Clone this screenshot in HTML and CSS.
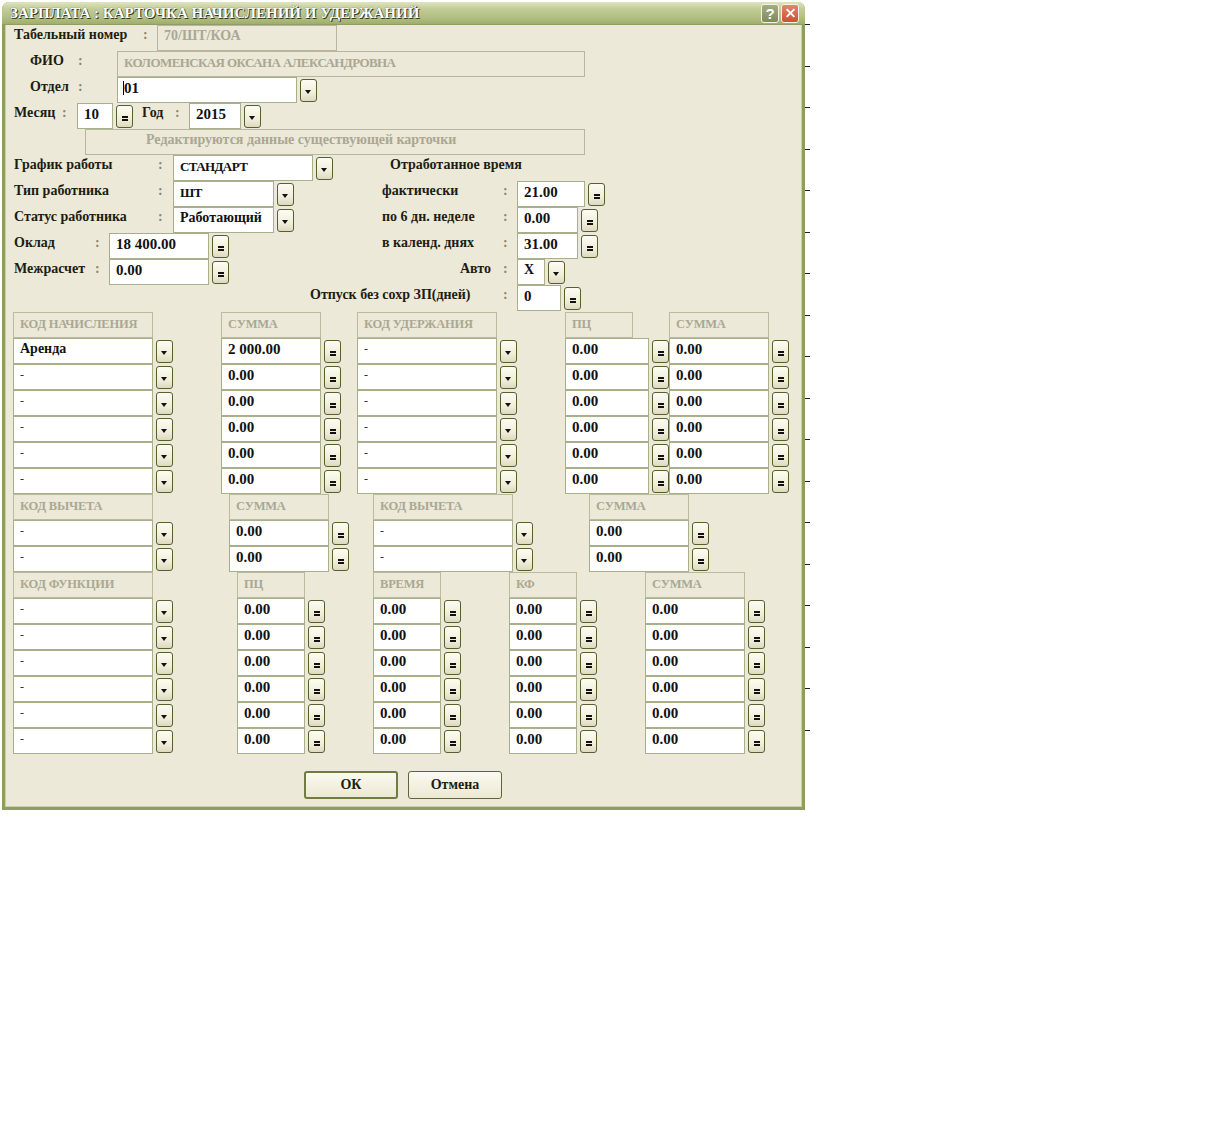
FILE: index.html
```html
<!DOCTYPE html>
<html lang="ru">
<head>
<meta charset="utf-8">
<title>Зарплата</title>
<link rel="stylesheet" href="styles.css">
</head>
<body>
<div class="desktop">
  <div class="ticks-right"></div>
  <div class="window">
    <div class="titlebar">
      <span class="title">ЗАРПЛАТА : КАРТОЧКА НАЧИСЛЕНИЙ И УДЕРЖАНИЙ</span>
      <span class="tb-btns"><span class="tb-help">?</span><span class="tb-close"></span></span>
    </div>
    <div class="form">
      <div class="row pl9">
        <span class="lbl w129">Табельный номер</span><span class="colon w14">:</span><span class="field ro w180">70/ШТ/КОА</span>
      </div>
      <div class="row pl25">
        <span class="lbl w48">ФИО</span><span class="colon w39">:</span><span class="field ro caps w468">КОЛОМЕНСКАЯ ОКСАНА АЛЕКСАНДРОВНА</span>
      </div>
      <div class="row pl25">
        <span class="lbl w48">Отдел</span><span class="colon w39">:</span><span class="field num w180"><span class="caret"></span>01</span><span class="btn dd"></span>
      </div>
      <div class="row pl9">
        <span class="lbl w48">Месяц</span><span class="colon w15">:</span><span class="field num w36">10</span><span class="btn eq"></span>
        <span class="lbl w33 ml9">Год</span><span class="colon w14">:</span><span class="field num w52">2015</span><span class="btn dd"></span>
      </div>
      <div class="row pl80">
        <span class="field ro w500 note">Редактируются данные существующей карточки</span>
      </div>
      <div class="row pl9">
        <span class="lbl w144">График работы</span><span class="colon w15">:</span><span class="field caps w140">СТАНДАРТ</span><span class="btn dd"></span>
        <span class="lbl ml57">Отработанное время</span>
      </div>
      <div class="row pl9">
        <span class="lbl w144">Тип работника</span><span class="colon w15">:</span><span class="field caps w101">ШТ</span><span class="btn dd"></span>
        <span class="lbl w121 ml88">фактически</span><span class="colon w14">:</span><span class="field num w68">21.00</span><span class="btn eq"></span>
      </div>
      <div class="row pl9">
        <span class="lbl w144">Статус работника</span><span class="colon w15">:</span><span class="field w101">Работающий</span><span class="btn dd"></span>
        <span class="lbl w121 ml88">по 6 дн. неделе</span><span class="colon w14">:</span><span class="field num w61">0.00</span><span class="btn eq"></span>
      </div>
      <div class="row pl9">
        <span class="lbl w81">Оклад</span><span class="colon w14">:</span><span class="field num w100">18 400.00</span><span class="btn eq"></span>
        <span class="lbl w121 ml153">в календ. днях</span><span class="colon w14">:</span><span class="field num w61">31.00</span><span class="btn eq"></span>
      </div>
      <div class="row pl9">
        <span class="lbl w81">Межрасчет</span><span class="colon w14">:</span><span class="field num w100">0.00</span><span class="btn eq"></span>
        <span class="lbl w121 ml153 right">Авто</span><span class="colon w14">:</span><span class="field w28">X</span><span class="btn dd"></span>
      </div>
      <div class="row pl305">
        <span class="lbl w193">Отпуск без сохр ЗП(дней)</span><span class="colon w14">:</span><span class="field num w44">0</span><span class="btn eq"></span>
      </div>

      <div class="tbl t1">
        <div class="cell"><span class="hdr w140">КОД НАЧИСЛЕНИЯ</span></div>
        <div class="cell"><span class="hdr w100">СУММА</span></div>
        <div class="cell"><span class="hdr w140">КОД УДЕРЖАНИЯ</span></div>
        <div class="cell"><span class="hdr w68">ПЦ</span></div>
        <div class="cell"><span class="hdr w100">СУММА</span></div>

        <div class="cell"><span class="field w140">Аренда</span><span class="btn dd"></span></div>
        <div class="cell"><span class="field num w100">2 000.00</span><span class="btn eq"></span></div>
        <div class="cell"><span class="field w140 dash">-</span><span class="btn dd"></span></div>
        <div class="cell"><span class="field num w84">0.00</span><span class="btn eq"></span></div>
        <div class="cell"><span class="field num w100">0.00</span><span class="btn eq"></span></div>

        <div class="cell"><span class="field w140 dash">-</span><span class="btn dd"></span></div>
        <div class="cell"><span class="field num w100">0.00</span><span class="btn eq"></span></div>
        <div class="cell"><span class="field w140 dash">-</span><span class="btn dd"></span></div>
        <div class="cell"><span class="field num w84">0.00</span><span class="btn eq"></span></div>
        <div class="cell"><span class="field num w100">0.00</span><span class="btn eq"></span></div>

        <div class="cell"><span class="field w140 dash">-</span><span class="btn dd"></span></div>
        <div class="cell"><span class="field num w100">0.00</span><span class="btn eq"></span></div>
        <div class="cell"><span class="field w140 dash">-</span><span class="btn dd"></span></div>
        <div class="cell"><span class="field num w84">0.00</span><span class="btn eq"></span></div>
        <div class="cell"><span class="field num w100">0.00</span><span class="btn eq"></span></div>

        <div class="cell"><span class="field w140 dash">-</span><span class="btn dd"></span></div>
        <div class="cell"><span class="field num w100">0.00</span><span class="btn eq"></span></div>
        <div class="cell"><span class="field w140 dash">-</span><span class="btn dd"></span></div>
        <div class="cell"><span class="field num w84">0.00</span><span class="btn eq"></span></div>
        <div class="cell"><span class="field num w100">0.00</span><span class="btn eq"></span></div>

        <div class="cell"><span class="field w140 dash">-</span><span class="btn dd"></span></div>
        <div class="cell"><span class="field num w100">0.00</span><span class="btn eq"></span></div>
        <div class="cell"><span class="field w140 dash">-</span><span class="btn dd"></span></div>
        <div class="cell"><span class="field num w84">0.00</span><span class="btn eq"></span></div>
        <div class="cell"><span class="field num w100">0.00</span><span class="btn eq"></span></div>

        <div class="cell"><span class="field w140 dash">-</span><span class="btn dd"></span></div>
        <div class="cell"><span class="field num w100">0.00</span><span class="btn eq"></span></div>
        <div class="cell"><span class="field w140 dash">-</span><span class="btn dd"></span></div>
        <div class="cell"><span class="field num w84">0.00</span><span class="btn eq"></span></div>
        <div class="cell"><span class="field num w100">0.00</span><span class="btn eq"></span></div>
      </div>

      <div class="tbl t2">
        <div class="cell"><span class="hdr w140">КОД ВЫЧЕТА</span></div>
        <div class="cell"><span class="hdr w100">СУММА</span></div>
        <div class="cell"><span class="hdr w140">КОД ВЫЧЕТА</span></div>
        <div class="cell"><span class="hdr w100">СУММА</span></div>

        <div class="cell"><span class="field w140 dash">-</span><span class="btn dd"></span></div>
        <div class="cell"><span class="field num w100">0.00</span><span class="btn eq"></span></div>
        <div class="cell"><span class="field w140 dash">-</span><span class="btn dd"></span></div>
        <div class="cell"><span class="field num w100">0.00</span><span class="btn eq"></span></div>

        <div class="cell"><span class="field w140 dash">-</span><span class="btn dd"></span></div>
        <div class="cell"><span class="field num w100">0.00</span><span class="btn eq"></span></div>
        <div class="cell"><span class="field w140 dash">-</span><span class="btn dd"></span></div>
        <div class="cell"><span class="field num w100">0.00</span><span class="btn eq"></span></div>
      </div>

      <div class="tbl t3">
        <div class="cell"><span class="hdr w140">КОД ФУНКЦИИ</span></div>
        <div class="cell"><span class="hdr w68">ПЦ</span></div>
        <div class="cell"><span class="hdr w68">ВРЕМЯ</span></div>
        <div class="cell"><span class="hdr w68">КФ</span></div>
        <div class="cell"><span class="hdr w100">СУММА</span></div>

        <div class="cell"><span class="field w140 dash">-</span><span class="btn dd"></span></div>
        <div class="cell"><span class="field num w68">0.00</span><span class="btn eq"></span></div>
        <div class="cell"><span class="field num w68">0.00</span><span class="btn eq"></span></div>
        <div class="cell"><span class="field num w68">0.00</span><span class="btn eq"></span></div>
        <div class="cell"><span class="field num w100">0.00</span><span class="btn eq"></span></div>

        <div class="cell"><span class="field w140 dash">-</span><span class="btn dd"></span></div>
        <div class="cell"><span class="field num w68">0.00</span><span class="btn eq"></span></div>
        <div class="cell"><span class="field num w68">0.00</span><span class="btn eq"></span></div>
        <div class="cell"><span class="field num w68">0.00</span><span class="btn eq"></span></div>
        <div class="cell"><span class="field num w100">0.00</span><span class="btn eq"></span></div>

        <div class="cell"><span class="field w140 dash">-</span><span class="btn dd"></span></div>
        <div class="cell"><span class="field num w68">0.00</span><span class="btn eq"></span></div>
        <div class="cell"><span class="field num w68">0.00</span><span class="btn eq"></span></div>
        <div class="cell"><span class="field num w68">0.00</span><span class="btn eq"></span></div>
        <div class="cell"><span class="field num w100">0.00</span><span class="btn eq"></span></div>

        <div class="cell"><span class="field w140 dash">-</span><span class="btn dd"></span></div>
        <div class="cell"><span class="field num w68">0.00</span><span class="btn eq"></span></div>
        <div class="cell"><span class="field num w68">0.00</span><span class="btn eq"></span></div>
        <div class="cell"><span class="field num w68">0.00</span><span class="btn eq"></span></div>
        <div class="cell"><span class="field num w100">0.00</span><span class="btn eq"></span></div>

        <div class="cell"><span class="field w140 dash">-</span><span class="btn dd"></span></div>
        <div class="cell"><span class="field num w68">0.00</span><span class="btn eq"></span></div>
        <div class="cell"><span class="field num w68">0.00</span><span class="btn eq"></span></div>
        <div class="cell"><span class="field num w68">0.00</span><span class="btn eq"></span></div>
        <div class="cell"><span class="field num w100">0.00</span><span class="btn eq"></span></div>

        <div class="cell"><span class="field w140 dash">-</span><span class="btn dd"></span></div>
        <div class="cell"><span class="field num w68">0.00</span><span class="btn eq"></span></div>
        <div class="cell"><span class="field num w68">0.00</span><span class="btn eq"></span></div>
        <div class="cell"><span class="field num w68">0.00</span><span class="btn eq"></span></div>
        <div class="cell"><span class="field num w100">0.00</span><span class="btn eq"></span></div>
      </div>

      <div class="actions">
        <span class="pbtn default">ОК</span><span class="pbtn">Отмена</span>
      </div>
    </div>
  </div>
</div>
</body>
</html>
```
FILE: styles.css
```css
* { box-sizing: border-box; }
html, body { margin: 0; padding: 0; background: #fff; }
body { font-family: "Liberation Serif", "DejaVu Serif", serif; }

.desktop { position: relative; width: 1215px; height: 1144px; background: #fff; }

.ticks-right {
  position: absolute; left: 805px; top: 24px; width: 5px; height: 720px;
  background: repeating-linear-gradient(to bottom, #222 0 1px, transparent 1px 41.5px);
}

.window {
  position: absolute; left: 2px; top: 2px;
  width: 803px; height: 808px;
  background: #ece9d9;
  border: 3px solid #8f9d63;
  border-top: none;
  border-radius: 7px 7px 0 0;
  box-shadow: inset 0 0 0 1px #c9cfae;
}

.titlebar {
  height: 23px;
  margin: 0 -3px;
  padding: 0 6px 0 8px;
  display: flex; align-items: center; justify-content: space-between;
  background: linear-gradient(to bottom, #dfe5c0 0%, #c3cd97 30%, #b2bf83 70%, #9fae6c 100%);
  border-radius: 7px 7px 0 0;
  border-bottom: 1px solid #8f9d63;
}
.title {
  color: #fff; font-weight: bold; font-size: 15px;
  text-shadow: 1px 1px 0 #3a3a22, 0 0 1px #3a3a22;
  font-family: "Liberation Serif", serif;
}
.tb-btns { display: flex; gap: 2px; }
.tb-help, .tb-close {
  width: 18px; height: 19px; border: 1px solid #f2f2e6; border-radius: 3px;
  display: flex; align-items: center; justify-content: center;
}
.tb-help {
  background: linear-gradient(#a4ad82, #7f8a5c);
  color: #fff; font: bold 15px "Liberation Sans", sans-serif;
}
.tb-close { background: linear-gradient(#e4856a, #c9532f); position: relative; }
.tb-close::before, .tb-close::after {
  content: ""; position: absolute; left: 3px; top: 7px; width: 11px; height: 2px; background: #fff;
}
.tb-close::before { transform: rotate(45deg); }
.tb-close::after { transform: rotate(-45deg); }

.form { display: flex; flex-direction: column; }

.row { display: flex; align-items: flex-start; height: 26px; flex: none; }
.pl9 { padding-left: 9px; }
.pl25 { padding-left: 25px; }
.pl80 { padding-left: 80px; }
.pl305 { padding-left: 305px; }

.lbl {
  flex: none; font-weight: bold; font-size: 14px; line-height: 16px;
  padding-top: 2px; color: #1d1d12; white-space: nowrap;
}
.lbl.right { text-align: right; padding-right: 12px; }
.colon {
  flex: none; font-weight: bold; font-size: 14px; line-height: 16px;
  padding-top: 2px; color: #8a866a;
}
.ml9 { margin-left: 9px; }
.ml57 { margin-left: 57px; }
.ml88 { margin-left: 88px; }
.ml153 { margin-left: 153px; }

.w14 { width: 14px; } .w15 { width: 15px; } .w28 { width: 28px; }
.w33 { width: 33px; } .w36 { width: 36px; } .w39 { width: 39px; }
.w44 { width: 44px; } .w48 { width: 48px; } .w52 { width: 52px; }
.w61 { width: 61px; } .w68 { width: 68px; } .w81 { width: 81px; }
.w84 { width: 84px; } .w100 { width: 100px; } .w101 { width: 101px; }
.w121 { width: 121px; } .w129 { width: 129px; } .w140 { width: 140px; }
.w144 { width: 144px; } .w180 { width: 180px; } .w193 { width: 193px; }
.w468 { width: 468px; } .w500 { width: 500px; }

.field {
  flex: none; height: 26px;
  background: #fff; border: 1px solid #a7b08a;
  padding: 2px 5px 0 6px;
  font-weight: bold; font-size: 14px; line-height: 16px; color: #111;
  white-space: nowrap; overflow: hidden; position: relative;
}
.field.num { font-size: 15px; }
.field.caps { font-size: 13px; letter-spacing: -0.6px; padding-top: 3px; }
.field.ro { background: transparent; border-color: #b8b6a0; color: #aaa792; }
.field.note { padding-left: 60px; }
.field.dash { font-weight: normal; font-size: 12px; color: #333; }
.caret { display: inline-block; width: 1px; height: 14px; background: #000; vertical-align: -2px; margin-left: -1px; }

.btn {
  flex: none; width: 17px; height: 23px; margin: 2px 0 0 3px;
  border: 1px solid #55602f; border-radius: 3px;
  background: linear-gradient(to bottom, #fdfcf3 0%, #f1eedc 60%, #dedac0 100%);
  position: relative;
}
.btn.dd::after {
  content: ""; position: absolute; left: 4px; top: 10px;
  border-left: 3.5px solid transparent; border-right: 3.5px solid transparent; border-top: 4px solid #111;
}
.btn.eq::after {
  content: ""; position: absolute; left: 5px; top: 10px; width: 6px; height: 2px;
  background: #111; box-shadow: 0 3px 0 #111;
}

.tbl { display: grid; grid-auto-rows: 26px; padding-left: 8px; }
.t1 { grid-template-columns: 208px 136px 208px 104px 120px; margin-top: 1px; }
.t2 { grid-template-columns: 216px 144px 216px 120px; }
.t3 { grid-template-columns: 224px 136px 136px 136px 120px; }
.cell { display: flex; align-items: flex-start; }

.hdr {
  flex: none; height: 26px; border: 1px solid #b9bb9c;
  padding: 3px 6px 0 6px;
  font-weight: bold; font-size: 12.5px; letter-spacing: -0.2px; line-height: 16px; color: #aaa893;
  white-space: nowrap;
}

.actions { display: flex; padding-left: 299px; margin-top: 17px; gap: 10px; }
.pbtn {
  width: 94px; height: 28px; border: 1px solid #5d6438; border-radius: 3px;
  background: linear-gradient(to bottom, #fbfaf1, #ece8d3);
  display: flex; align-items: center; justify-content: center;
  font-weight: bold; font-size: 14px; color: #1d1d12;
}
.pbtn.default { border: 2px solid #6f7d42; }
```
